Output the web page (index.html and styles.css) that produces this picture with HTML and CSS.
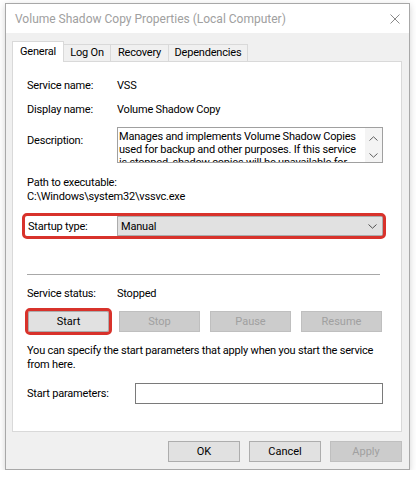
FILE: index.html
```html
<!DOCTYPE html>
<html lang="en">
<head>
  <meta charset="UTF-8">
  <meta name="viewport" content="width=device-width, initial-scale=1.0">
  <title>Volume Shadow Copy Properties</title>
  <link rel="stylesheet" href="styles.css">
</head>
<body>
  <div class="window">
    <div class="titlebar">
      <span class="title">Volume Shadow Copy Properties (Local Computer)</span>
      <svg class="close" width="10" height="10" viewBox="0 0 10 10">
        <path d="M0.5 0.5L9.5 9.5M9.5 0.5L0.5 9.5" stroke="#8a8a8a" stroke-width="1" fill="none"/>
      </svg>
    </div>

    <div class="client">
      <div class="tabs">
        <div class="tab tab-general active">General</div>
        <div class="tab tab-logon">Log On</div>
        <div class="tab tab-recovery">Recovery</div>
        <div class="tab tab-deps">Dependencies</div>
      </div>

      <div class="panel">
        <div class="row">
          <span class="label">Service name:</span>
          <span>VSS</span>
        </div>
        <div class="row row-gap">
          <span class="label">Display name:</span>
          <span>Volume Shadow Copy</span>
        </div>
        <div class="row row-desc">
          <span class="label label-desc">Description:</span>
          <div class="desc">
            <div class="desc-text">Manages and implements Volume Shadow Copies<br>used for backup and other purposes. If this service<br>is stopped, shadow copies will be unavailable for</div>
            <div class="scroll">
              <svg class="arrow-up" width="9" height="5" viewBox="0 0 9 5"><path d="M0.5 4.5L4.5 0.8L8.5 4.5" stroke="#606060" fill="none"/></svg>
              <svg class="arrow-down" width="9" height="5" viewBox="0 0 9 5"><path d="M0.5 0.5L4.5 4.2L8.5 0.5" stroke="#606060" fill="none"/></svg>
            </div>
          </div>
        </div>

        <div class="path">
          <div>Path to executable:</div>
          <div>C:\Windows\system32\vssvc.exe</div>
        </div>

        <div class="row startup">
          <span class="label label-startup">Startup type:</span>
          <div class="select">
            <span>Manual</span>
            <svg width="9" height="5" viewBox="0 0 9 5"><path d="M0.5 0.5L4.5 4.2L8.5 0.5" stroke="#505050" fill="none"/></svg>
          </div>
        </div>

        <div class="divider"></div>

        <div class="row status">
          <span class="label">Service status:</span>
          <span>Stopped</span>
        </div>

        <div class="controls">
          <button class="btn btn-start">Start</button>
          <button class="btn" disabled>Stop</button>
          <button class="btn" disabled>Pause</button>
          <button class="btn" disabled>Resume</button>
        </div>

        <p class="hint">You can specify the start parameters that apply when you start the service<br>from here.</p>

        <div class="row params">
          <span class="label label-params">Start parameters:</span>
          <input class="param-input" type="text">
        </div>
      </div>

      <div class="actions">
        <button class="btn btn-dialog">OK</button>
        <button class="btn btn-dialog">Cancel</button>
        <button class="btn btn-dialog" disabled>Apply</button>
      </div>
    </div>
  </div>
</body>
</html>
```

FILE: styles.css
```css
/* General */
body {
  margin: 0;
  background: #ffffff;
  font-family: Roboto, "Liberation Sans", sans-serif;
  font-size: 11px;
  letter-spacing: -0.2px;
  color: #000000;
}

.window {
  margin: 3px 0 0 5px;
  width: 405px;
  box-sizing: border-box;
  border: 1px solid #a8a8a8;
  background: #f0f0f0;
  box-shadow: 0 2px 7px rgba(0, 0, 0, 0.18);
}

/* Title bar */
.titlebar {
  height: 29px;
  background: #ffffff;
  display: flex;
  align-items: center;
  justify-content: space-between;
  padding: 0 9px;
}

.title {
  color: #a0a0a0;
  font-size: 12px;
  letter-spacing: 0;
}

.close {
  display: block;
}

.client {
  padding: 8px 7px 7px 6px;
}

/* Tabs */
.tabs {
  display: flex;
  align-items: flex-end;
  height: 20px;
  position: relative;
  z-index: 1;
}

.tab {
  box-sizing: border-box;
  height: 17px;
  line-height: 15px;
  border: 1px solid #d9d9d9;
  border-bottom: none;
  background: #f0f0f0;
  text-align: center;
  margin-left: -1px;
}

.tab.active {
  height: 21px;
  line-height: 20px;
  margin-bottom: -1px;
  margin-left: 0;
  background: #ffffff;
}

.tab-general { width: 52px; }
.tab-logon { width: 48px; }
.tab-recovery { width: 59px; }
.tab-deps { width: 80px; }

/* Panel */
.panel {
  background: #ffffff;
  border: 1px solid #d9d9d9;
  padding: 16px 18px 27px 14px;
}

.row {
  display: flex;
  align-items: center;
  line-height: 15px;
}

.row-gap {
  margin-top: 9px;
}

.label {
  width: 90px;
  flex: none;
}

.row-desc {
  margin-top: 10px;
  align-items: flex-start;
}

.label-desc {
  margin-top: 6px;
}

.desc {
  width: 266px;
  height: 36px;
  box-sizing: border-box;
  border: 1px solid #a0a0a0;
  display: flex;
  overflow: hidden;
}

.desc-text {
  flex: 1;
  padding: 2px 0 0 1px;
  line-height: 13px;
  white-space: nowrap;
  overflow: hidden;
}

.scroll {
  width: 17px;
  flex: none;
  background: #f4f4f4;
  display: flex;
  flex-direction: column;
  align-items: center;
}

.scroll svg {
  display: block;
}

.arrow-up {
  margin-top: 8px;
}

.arrow-down {
  margin-top: 12px;
}

.path {
  margin-top: 13px;
  line-height: 14px;
}

/* Startup type (highlighted) */
.startup {
  margin: 12px 0 0 -2px;
  height: 20px;
  outline: 3px solid #d8322b;
  border-radius: 2px;
}

.label-startup {
  width: 92px;
  box-sizing: border-box;
  padding-left: 3px;
}

.select {
  flex: 1;
  height: 20px;
  box-sizing: border-box;
  background: #e1e1e1;
  border: 1px solid #acacac;
  display: flex;
  align-items: center;
  justify-content: space-between;
  padding: 0 5px 0 3px;
}

.select svg {
  display: block;
}

.divider {
  margin: 38px 3px 0 0;
  height: 1px;
  background: #a8a8a8;
}

.status {
  margin-top: 11px;
}

/* Buttons */
.controls {
  margin: 10px 1px 0 1px;
  display: flex;
  justify-content: space-between;
}

.btn {
  width: 81px;
  height: 21px;
  box-sizing: border-box;
  border: 1px solid #adadad;
  background: #e1e1e1;
  font: inherit;
  color: #000000;
  padding: 0;
  line-height: 19px;
  text-align: center;
}

.btn:disabled {
  background: #cccccc;
  border-color: #bfbfbf;
  color: #a0a0a0;
}

.btn-start {
  outline: 3px solid #d8322b;
  border-radius: 2px;
}

.hint {
  margin: 12px 0 0 0;
  line-height: 14px;
  white-space: nowrap;
}

.params {
  margin-top: 11px;
}

.label-params {
  width: 108px;
}

.param-input {
  width: 248px;
  height: 21px;
  box-sizing: border-box;
  border: 1px solid #7a7a7a;
  background: #ffffff;
  padding: 0 3px;
  font: inherit;
  margin: 0;
}

.actions {
  margin-top: 9px;
  display: flex;
  justify-content: flex-end;
  gap: 9px;
}

.btn-dialog {
  width: 72px;
}
```
